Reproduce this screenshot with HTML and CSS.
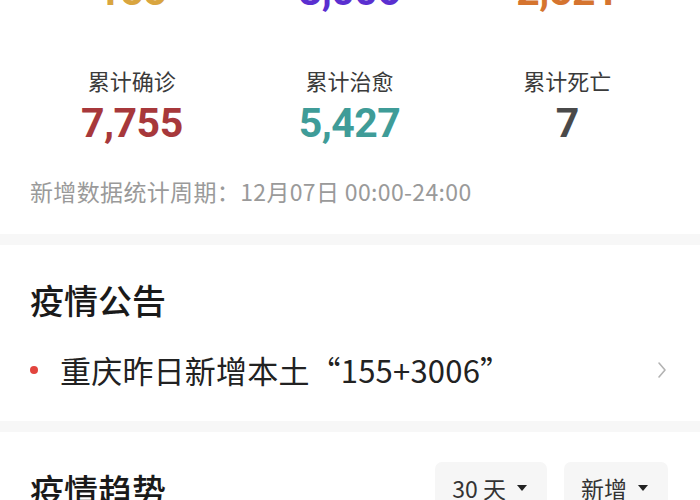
FILE: index.html
```html
<!DOCTYPE html>
<html lang="zh-CN">
<head>
<meta charset="utf-8">
<title>疫情数据</title>
<link rel="stylesheet" href="styles.css">
</head>
<body>
<main class="page">
  <section class="card overview">
    <div class="stats">
      <div class="stat">
        <div class="stat-label">现有确诊</div>
        <div class="stat-num num-yellow">155</div>
      </div>
      <div class="stat">
        <div class="stat-label">新增本土</div>
        <div class="stat-num num-purple">3,006</div>
      </div>
      <div class="stat">
        <div class="stat-label">无症状</div>
        <div class="stat-num num-orange">2,521</div>
      </div>
      <div class="stat">
        <div class="stat-label">累计确诊</div>
        <div class="stat-num num-red">7,755</div>
      </div>
      <div class="stat">
        <div class="stat-label">累计治愈</div>
        <div class="stat-num num-teal">5,427</div>
      </div>
      <div class="stat">
        <div class="stat-label">累计死亡</div>
        <div class="stat-num num-gray">7</div>
      </div>
    </div>
    <p class="period">新增数据统计周期：12月07日 00:00-24:00</p>
  </section>

  <section class="card notice">
    <h2 class="card-title">疫情公告</h2>
    <div class="notice-row">
      <span class="dot"></span>
      <span class="notice-text">重庆昨日新增本土“155+3006”</span>
      <svg class="chevron" width="10" height="18" viewBox="0 0 10 18" aria-hidden="true">
        <polyline points="2,2 8,9 2,16" fill="none" stroke="#b3b3b3" stroke-width="1.6" stroke-linecap="round" stroke-linejoin="round"/>
      </svg>
    </div>
  </section>

  <section class="card trend">
    <div class="trend-head">
      <h2 class="card-title">疫情趋势</h2>
      <div class="filters">
        <button class="filter">30 天<span class="caret"></span></button>
        <button class="filter">新增<span class="caret"></span></button>
      </div>
    </div>
  </section>
</main>
</body>
</html>
```

FILE: styles.css
```css
html, body {
  margin: 0;
  padding: 0;
  background: #f7f7f7;
}

body {
  font-family: "Noto Sans CJK SC", "Noto Sans", sans-serif;
  color: #222;
  width: 700px;
  overflow: hidden;
}

.page {
  display: flex;
  flex-direction: column;
  gap: 11px;
  margin-top: -67px;
}

.card {
  background: #fff;
}

.overview {
  padding: 0 0 27px;
}

.stats {
  display: grid;
  grid-template-columns: repeat(3, 1fr);
  row-gap: 50px;
  padding: 0 24px 0 23px;
}

.stat {
  display: flex;
  flex-direction: column;
  align-items: center;
}

.stat-label {
  font-size: 22px;
  line-height: 30px;
  color: #3a3a3a;
}

.stat-num {
  margin-top: 4px;
  font-family: Roboto, "Liberation Sans", sans-serif;
  font-weight: 700;
  font-size: 41px;
  line-height: 48px;
  letter-spacing: -0.5px;
}

.num-yellow { color: #d9a53f; }
.num-purple { color: #5a2fd0; }
.num-orange { color: #d5742f; }
.num-red { color: #a7383b; }
.num-teal { color: #3f9c98; }
.num-gray { color: #4a4a4a; }

.period {
  margin: 28px 0 0;
  padding: 0 30px;
  font-size: 23px;
  line-height: 32px;
  letter-spacing: 0.35px;
  color: #9a9a9a;
}

.card-title {
  margin: 0;
  font-size: 34px;
  line-height: 44px;
  font-weight: 500;
  color: #1a1a1a;
}

.notice {
  padding: 33px 33px 29px 30px;
}

.notice-row {
  display: flex;
  align-items: center;
  margin-top: 26px;
  height: 44px;
}

.dot {
  width: 8px;
  height: 8px;
  border-radius: 50%;
  background: #e2443d;
  flex: none;
}

.notice-text {
  margin-left: 22px;
  font-size: 31px;
  line-height: 44px;
  letter-spacing: 0.2px;
  color: #222;
  flex: 1;
}

.chevron {
  flex: none;
}

.trend {
  padding: 30px 32px 40px 30px;
}

.trend-head {
  display: flex;
  align-items: center;
  justify-content: space-between;
}

.filters {
  display: flex;
  gap: 17px;
}

.filter {
  display: flex;
  align-items: center;
  gap: 11px;
  border: none;
  background: #f6f6f6;
  border-radius: 7px;
  padding: 9px 20px 13px 17px;
  font-family: "Noto Sans CJK SC", "Noto Sans", sans-serif;
  font-size: 23px;
  line-height: 34px;
  color: #333;
}

.caret {
  width: 0;
  height: 0;
  border-left: 5px solid transparent;
  border-right: 5px solid transparent;
  border-top: 6px solid #222;
}
```
